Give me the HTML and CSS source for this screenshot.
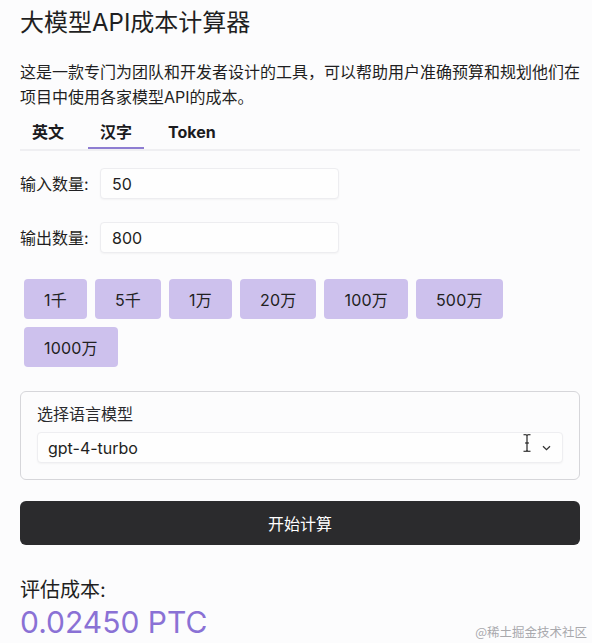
FILE: index.html
```html
<!DOCTYPE html>
<html lang="zh-CN">
<head>
<meta charset="utf-8">
<title>大模型API成本计算器</title>
<link rel="stylesheet" href="styles.css">
</head>
<body>
<main class="app">
  <h1 class="title">大模型API成本计算器</h1>
  <p class="intro">这是一款专门为团队和开发者设计的工具，可以帮助用户准确预算和规划他们在项目中使用各家模型API的成本。</p>

  <nav class="tabs">
    <span class="tab">英文</span>
    <span class="tab active">汉字</span>
    <span class="tab">Token</span>
  </nav>

  <div class="field">
    <label class="field-label">输入数量:</label>
    <div class="input">50</div>
  </div>
  <div class="field field-second">
    <label class="field-label">输出数量:</label>
    <div class="input">800</div>
  </div>

  <div class="presets">
    <button class="preset">1千</button>
    <button class="preset">5千</button>
    <button class="preset">1万</button>
    <button class="preset">20万</button>
    <button class="preset">100万</button>
    <button class="preset">500万</button>
    <button class="preset">1000万</button>
  </div>

  <section class="card">
    <div class="card-label">选择语言模型</div>
    <div class="select">
      <span class="select-value">gpt-4-turbo</span>
      <svg class="chevron" width="9" height="6" viewBox="0 0 9 6"><path d="M1 1.2 L4.5 4.6 L8 1.2" fill="none" stroke="#333" stroke-width="1.3"/></svg>
      <svg class="ibeam" width="8" height="18" viewBox="0 0 8 18"><path d="M0.5 0.8 H3 Q4 0.8 4 2 V16 Q4 17.2 3 17.2 H0.5 M7.5 0.8 H5 Q4 0.8 4 2 M4 16 Q4 17.2 5 17.2 H7.5 M2 9 H6" fill="none" stroke="#111" stroke-width="1.1"/></svg>
    </div>
  </section>

  <button class="submit">开始计算</button>

  <div class="result-label">评估成本:</div>
  <div class="result-value">0.02450 PTC</div>
</main>
<div class="watermark">@稀土掘金技术社区</div>
</body>
</html>
```

FILE: styles.css
```css
html, body {
  margin: 0;
  padding: 0;
  background: #fcfcfd;
}
body {
  font-family: "Inter", "Noto Sans CJK SC", sans-serif;
  color: #1f1f22;
  width: 592px;
  height: 643px;
  overflow: hidden;
  position: relative;
}
.app {
  padding: 0 12px 0 20px;
}
.title {
  margin: 7px 0 0;
  font-size: 24px;
  line-height: 32px;
  font-weight: 400;
}
.intro {
  margin: 21px -2px 0 0;
  font-size: 16px;
  line-height: 25px;
}
.tabs {
  display: flex;
  gap: 12px;
  margin-top: 10px;
  border-bottom: 2px solid #efeff2;
}
.tab {
  padding: 0 12px 3px;
  font-size: 16px;
  line-height: 24px;
  font-weight: 700;
  color: #1b1b1e;
  border-bottom: 2px solid transparent;
}
.tab.active {
  border-bottom-color: #8e7dd2;
}
.field {
  display: flex;
  align-items: center;
  margin-top: 17px;
}
.field-second {
  margin-top: 23px;
}
.field-label {
  width: 80px;
  font-size: 16px;
  line-height: 24px;
}
.input {
  box-sizing: border-box;
  width: 239px;
  height: 31px;
  padding: 0 11px;
  display: flex;
  align-items: center;
  font-size: 16px;
  background: #fefefe;
  border: 1px solid #ededf0;
  border-radius: 4px;
  box-shadow: 0 1px 2px rgba(0,0,0,0.04);
}
.presets {
  display: flex;
  flex-wrap: wrap;
  margin-top: 22px;
}
.preset {
  margin: 4px;
  height: 40px;
  padding: 0 20px;
  border: none;
  border-radius: 4px;
  background: #cdc1ed;
  color: #222;
  font-family: "Inter", "Noto Sans CJK SC", sans-serif;
  font-size: 16px;
  letter-spacing: 0.2px;
}
.card {
  margin-top: 20px;
  border: 1px solid #d6d6da;
  border-radius: 6px;
  padding: 12px 16px 16px;
}
.card-label {
  font-size: 16px;
  line-height: 20px;
  color: #2a2a2e;
}
.select {
  position: relative;
  box-sizing: border-box;
  margin-top: 8px;
  height: 31px;
  padding: 0 10px;
  display: flex;
  align-items: center;
  justify-content: space-between;
  background: #fefefe;
  border: 1px solid #eeeef1;
  border-radius: 4px;
  box-shadow: 0 1px 2px rgba(0,0,0,0.04);
  font-size: 16px;
}
.chevron {
  margin-right: 1px;
}
.ibeam {
  position: absolute;
  left: 485px;
  top: 1px;
}
.submit {
  display: block;
  width: 100%;
  margin-top: 21px;
  height: 44px;
  border: none;
  border-radius: 6px;
  background: #2b2b2d;
  color: #fff;
  font-family: "Inter", "Noto Sans CJK SC", sans-serif;
  font-size: 16px;
}
.result-label {
  margin-top: 31px;
  font-size: 20px;
  line-height: 28px;
}
.result-value {
  font-size: 30px;
  line-height: 36px;
  color: #8a71d5;
}
.watermark {
  position: absolute;
  right: 5px;
  bottom: 2px;
  font-family: "Noto Sans CJK SC", sans-serif;
  font-size: 12.5px;
  color: #a9a9ad;
}
```
